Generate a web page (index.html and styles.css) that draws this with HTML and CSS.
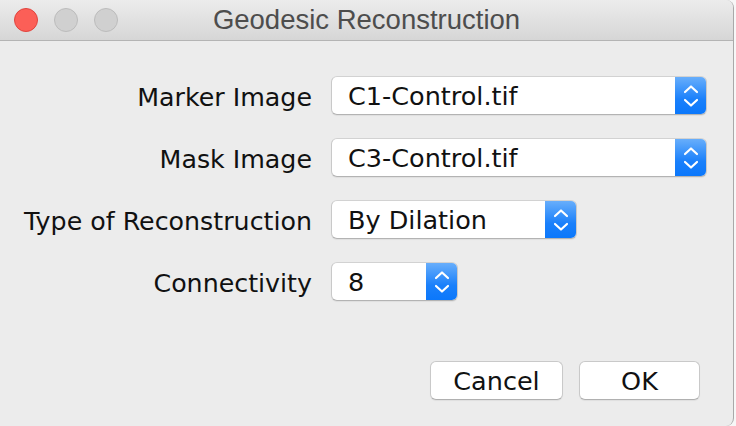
FILE: index.html
```html
<!DOCTYPE html>
<html>
<head>
<meta charset="utf-8">
<link rel="stylesheet" href="styles.css">
</head>
<body>
<div class="window">
  <div class="titlebar">
    <div class="lights">
      <span class="light close"></span>
      <span class="light"></span>
      <span class="light"></span>
    </div>
    <div class="title">Geodesic Reconstruction</div>
  </div>
  <div class="content">
    <div class="form">
      <div class="label">Marker Image</div>
      <div class="popup w-wide"><span class="value">C1-Control.tif</span><span class="arrows"><svg width="16" height="22" viewBox="0 0 16 22"><path d="M2 7 L8 1.5 L14 7 M2 15 L8 20.5 L14 15" fill="none" stroke="#fff" stroke-width="2.2" stroke-linecap="round" stroke-linejoin="round"/></svg></span></div>
      <div class="label">Mask Image</div>
      <div class="popup w-wide"><span class="value">C3-Control.tif</span><span class="arrows"><svg width="16" height="22" viewBox="0 0 16 22"><path d="M2 7 L8 1.5 L14 7 M2 15 L8 20.5 L14 15" fill="none" stroke="#fff" stroke-width="2.2" stroke-linecap="round" stroke-linejoin="round"/></svg></span></div>
      <div class="label">Type of Reconstruction</div>
      <div class="popup w-mid"><span class="value">By Dilation</span><span class="arrows"><svg width="16" height="22" viewBox="0 0 16 22"><path d="M2 7 L8 1.5 L14 7 M2 15 L8 20.5 L14 15" fill="none" stroke="#fff" stroke-width="2.2" stroke-linecap="round" stroke-linejoin="round"/></svg></span></div>
      <div class="label">Connectivity</div>
      <div class="popup w-small"><span class="value">8</span><span class="arrows"><svg width="16" height="22" viewBox="0 0 16 22"><path d="M2 7 L8 1.5 L14 7 M2 15 L8 20.5 L14 15" fill="none" stroke="#fff" stroke-width="2.2" stroke-linecap="round" stroke-linejoin="round"/></svg></span></div>
    </div>
    <div class="buttons">
      <div class="button cancel">Cancel</div>
      <div class="button ok">OK</div>
    </div>
  </div>
</div>
</body>
</html>
```

FILE: styles.css
```css
html, body {
  margin: 0;
  padding: 0;
}
body {
  background: #f7f7f7;
  width: 736px;
  height: 426px;
  overflow: hidden;
}
.window {
  width: 734px;
  height: 426px;
  box-sizing: border-box;
  background: #ececec;
  border-right: 1px solid #a9a9a9;
  border-top-right-radius: 8px;
  border-bottom-right-radius: 8px;
  overflow: hidden;
}
.titlebar {
  height: 40px;
  border-bottom: 1px solid #b4b4b4;
  background: linear-gradient(#ececec, #d6d6d6);
  display: flex;
  align-items: center;
  position: relative;
}
.lights {
  display: flex;
  gap: 16px;
  padding-left: 14px;
  margin-top: -1px;
}
.light {
  width: 24px;
  height: 24px;
  border-radius: 50%;
  box-sizing: border-box;
  background: #d0d0d0;
  border: 1px solid #bcbcbc;
}
.light.close {
  background: #fc5f57;
  border-color: #e0443e;
}
.title {
  position: absolute;
  left: 0;
  right: 0;
  top: 0;
  bottom: 0;
  display: flex;
  align-items: center;
  justify-content: center;
  font-family: "Liberation Sans", Arial, sans-serif;
  font-size: 27.5px;
  color: #4d4d4d;
  margin-top: -1px;
}
.content {
  padding-top: 35px;
  font-family: "DejaVu Sans", sans-serif;
  font-size: 25.3px;
  color: #111;
}
.form {
  display: grid;
  grid-template-columns: 312px auto;
  column-gap: 19px;
  row-gap: 23px;
  align-items: center;
}
.label {
  text-align: right;
  padding-top: 4px;
}
.popup {
  height: 39px;
  box-sizing: border-box;
  background: #fff;
  border: 1px solid #c9c9c9;
  border-top-color: #d2d2d2;
  border-bottom-color: #b3b3b3;
  border-radius: 6px;
  display: flex;
  align-items: center;
  overflow: hidden;
  box-shadow: 0 1px 1px rgba(0,0,0,0.06);
}
.w-wide { width: 376px; }
.w-mid { width: 246px; }
.w-small { width: 127px; }
.value {
  flex: 1;
  padding-left: 16px;
  line-height: 37px;
  padding-top: 1px;
  font-size: 25.5px;
}
.arrows {
  width: 32px;
  height: 39px;
  margin: -1px -1px -1px 0;
  background: linear-gradient(#6bb0fb, #1a80fb 60%, #0a77fb);
  display: flex;
  align-items: center;
  justify-content: center;
}
.buttons {
  display: flex;
  justify-content: flex-end;
  gap: 16px;
  padding-right: 33px;
  margin-top: 60px;
}
.button {
  height: 39px;
  box-sizing: border-box;
  background: #fff;
  border: 1px solid #c9c9c9;
  border-bottom-color: #b0b0b0;
  border-radius: 6px;
  display: flex;
  align-items: center;
  justify-content: center;
  box-shadow: 0 1px 1px rgba(0,0,0,0.06);
  font-size: 25.5px;
  padding-top: 1px;
}
.cancel { width: 133px; }
.ok { width: 121px; }
```
